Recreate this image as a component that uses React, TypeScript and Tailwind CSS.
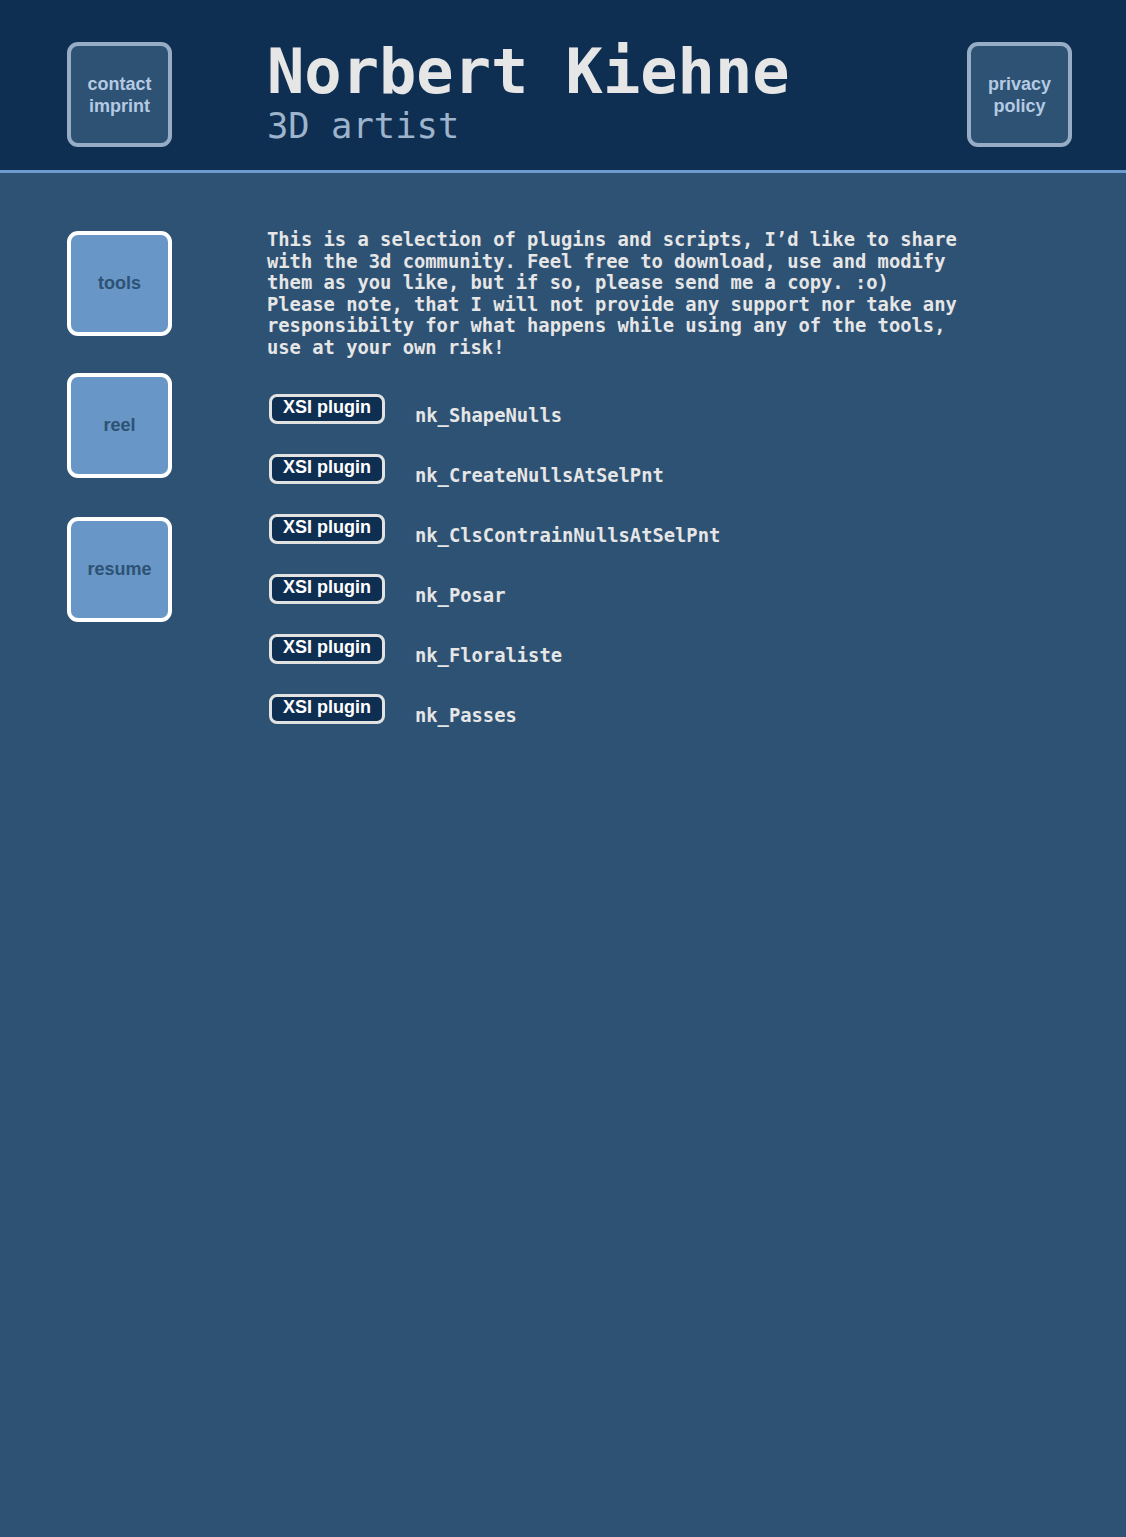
const mono = "font-['DejaVu_Sans_Mono','Liberation_Mono',monospace]"
const sans = "font-['Liberation_Sans',Arial,sans-serif]"

const tools = [
  'nk_ShapeNulls',
  'nk_CreateNullsAtSelPnt',
  'nk_ClsContrainNullsAtSelPnt',
  'nk_Posar',
  'nk_Floraliste',
  'nk_Passes',
]

function HeaderBox({ lines }: { lines: string[] }) {
  return (
    <a
      href="#"
      className={`${sans} flex h-[105px] w-[105px] shrink-0 flex-col items-center justify-center rounded-[11px] border-4 border-[#97adc6] bg-[#2d5274] text-[18px] font-bold leading-[22px] text-[#b4cae2]`}
    >
      {lines.map((l) => (
        <span key={l}>{l}</span>
      ))}
    </a>
  )
}

function NavBox({ label }: { label: string }) {
  return (
    <a
      href="#"
      className={`${sans} flex h-[105px] w-[105px] items-center justify-center rounded-[11px] border-4 border-white bg-[#6796c7] text-[18px] font-bold text-[#2d5274]`}
    >
      {label}
    </a>
  )
}

export default function App() {
  return (
    <div className="min-h-[1537px] bg-[#2e5274]">
      <header className="flex h-[173px] items-start border-b-[3px] border-[#6b9bd1] bg-[#0f2f52] pl-[67px] pr-[54px] pt-[42px]">
        <HeaderBox lines={['contact', 'imprint']} />
        <div className={`${mono} ml-[95px] flex-1`}>
          <h1 className="mt-[-1px] text-[62px] font-bold leading-[62px] text-[#e6e6e6]">Norbert Kiehne</h1>
          <p className="mt-[4px] text-[35.5px] leading-[38px] text-[#9db4cc]">3D artist</p>
        </div>
        <HeaderBox lines={['privacy', 'policy']} />
      </header>

      <main className="flex pl-[67px] pt-[58px]">
        <nav className="flex w-[200px] shrink-0 flex-col gap-[37px]">
          <NavBox label="tools" />
          <NavBox label="reel" />
          <div className="mt-[2px]">
            <NavBox label="resume" />
          </div>
        </nav>

        <section className={`${mono} w-[700px] text-[18.8px] font-bold text-[#e6e6e6]`}>
          <p className="mt-[-2px] leading-[21.6px]">
            This is a selection of plugins and scripts, I’d like to share with the 3d community. Feel free to
            download, use and modify them as you like, but if so, please send me a copy. :o) Please note, that I
            will not provide any support nor take any responsibilty for what happens while using any of the tools,
            use at your own risk!
          </p>

          <ul className="mt-[35px] flex flex-col gap-[30px] pl-[2px]">
            {tools.map((t) => (
              <li key={t} className="flex h-[30px] items-start">
                <span
                  className={`${sans} flex h-[30px] w-[116px] shrink-0 items-center justify-center rounded-[8px] border-[3px] border-[#e2e2e2] bg-[#0f2f52] pb-[3px] text-[18px] font-bold text-white`}
                >
                  XSI plugin
                </span>
                <span className="ml-[30px] mt-[10px] leading-[24px]">{t}</span>
              </li>
            ))}
          </ul>
        </section>
      </main>
    </div>
  )
}
